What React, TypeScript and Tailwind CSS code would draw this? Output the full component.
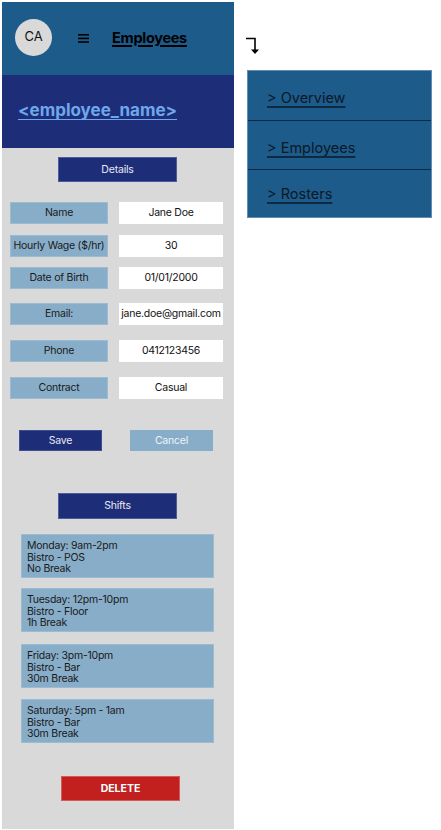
import React from "react";

const fields: [string, string][] = [
  ["Name", "Jane Doe"],
  ["Hourly Wage ($/hr)", "30"],
  ["Date of Birth", "01/01/2000"],
  ["Email:", "jane.doe@gmail.com"],
  ["Phone", "0412123456"],
  ["Contract", "Casual"],
];

const rowMargins = ["mt-[20px]", "mt-[11px]", "mt-[10px]", "mt-[14px]", "mt-[15px]", "mt-[15px]"];

const shifts: string[][] = [
  ["Monday: 9am-2pm", "Bistro - POS", "No Break"],
  ["Tuesday: 12pm-10pm", "Bistro - Floor", "1h Break"],
  ["Friday: 3pm-10pm", "Bistro - Bar", "30m Break"],
  ["Saturday: 5pm - 1am", "Bistro - Bar", "30m Break"],
];
const shiftMargins = ["mt-[15px]", "mt-[10px]", "mt-[12px]", "mt-[11px]"];

export default function App() {
  return (
    <div
      className="flex bg-white w-[441px] h-[830px] pl-[2px] pt-[2px]"
      style={{ fontFamily: "Inter, 'Noto Sans', sans-serif" }}
    >
      {/* phone panel */}
      <div className="flex flex-col w-[232px] h-[827px] bg-[#d9d9d9]">
        {/* header */}
        <div className="flex items-center h-[73px] bg-[#1c5b8a] pl-[13px]">
          <div className="flex items-center justify-center w-[37px] h-[37px] rounded-full bg-[#d9d9d9] text-[13px] text-[#111] mt-[-3px]">
            CA
          </div>
          <svg width="11" height="9" viewBox="0 0 11 9" className="ml-[26px]">
            <rect x="0" y="0" width="11" height="1.6" fill="#000" />
            <rect x="0" y="3.6" width="11" height="1.6" fill="#000" />
            <rect x="0" y="7.2" width="11" height="1.6" fill="#000" />
          </svg>
          <span className="ml-[23px] text-[14.5px] font-bold text-black underline decoration-2 underline-offset-2 tracking-[-0.3px] mt-[-1px]">
            Employees
          </span>
        </div>
        {/* name band */}
        <div className="flex items-center h-[73px] bg-[#1e2d78] pl-[16px]">
          <span className="text-[17px] font-bold text-[#6ea8ec] underline underline-offset-[3px] mt-[-1px]">
            &lt;employee_name&gt;
          </span>
        </div>
        {/* body */}
        <div className="flex flex-col">
          <div className="self-start ml-[56px] mt-[9px] w-[119px] h-[25px] flex items-center justify-center bg-[#1e2d78] border border-[#4b5c9c] text-[10.5px] tracking-[-0.2px] text-[#e8e8f2]">
            Details
          </div>
          {fields.map(([label, value], i) => (
            <div key={label} className={`flex ${rowMargins[i]} pl-[8px]`}>
              <div className="w-[98px] h-[22px] flex items-center justify-center bg-[#88adc9] border border-[#9bbbd3] text-[10.5px] tracking-[-0.25px] text-[#1a1a1a] whitespace-nowrap">
                {label}
              </div>
              <div className="ml-[11px] w-[104px] h-[22px] flex items-center justify-center bg-white text-[10.5px] tracking-[-0.25px] text-[#111] whitespace-nowrap">
                {value}
              </div>
            </div>
          ))}
          <div className="flex mt-[31px] pl-[17px]">
            <div className="w-[83px] h-[21px] flex items-center justify-center bg-[#1e2d78] border border-[#3d4f92] text-[10.5px] tracking-[-0.2px] text-[#e8e8f2]">
              Save
            </div>
            <div className="ml-[28px] w-[83px] h-[21px] flex items-center justify-center bg-[#88adc9] text-[10.5px] tracking-[-0.2px] text-[#eef3f8]">
              Cancel
            </div>
          </div>
          <div className="self-start ml-[56px] mt-[42px] w-[119px] h-[26px] flex items-center justify-center bg-[#1e2d78] border border-[#4b5c9c] text-[10.5px] tracking-[-0.2px] text-[#e8e8f2]">
            Shifts
          </div>
          {shifts.map((lines, i) => (
            <div
              key={i}
              className={`${shiftMargins[i]} ml-[19px] w-[193px] h-[44px] bg-[#88adc9] border border-[#9bbbd3] pl-[5px] pt-[5px] text-[10.5px] tracking-[-0.25px] leading-[11.7px] text-[#1a1a1a]`}
            >
              {lines.map((l) => (
                <div key={l}>{l}</div>
              ))}
            </div>
          ))}
          <div className="self-start ml-[59px] mt-[33px] w-[119px] h-[25px] flex items-center justify-center bg-[#c21f1f] border border-[#d65a5a] text-[10.5px] font-bold text-white">
            DELETE
          </div>
        </div>
      </div>

      {/* right side */}
      <div className="flex flex-col ml-[11px]">
        <svg width="16" height="18" viewBox="0 0 16 18" className="mt-[35px]">
          <path d="M1 1.5 H10 V14" stroke="#000" strokeWidth="1.6" fill="none" />
          <path d="M6 12.5 L10 17 L14 12.5 Z" fill="#000" />
        </svg>
        <div className="mt-[15px] ml-[2px] w-[185px] h-[148px] flex flex-col bg-[#1c5b8a] border border-[#5f8db3]">
          <div className="h-[50px] flex items-center pl-[19px] border-b border-[#0e2a42]">
            <span className="text-[14.5px] text-[#0b1826] underline decoration-2 decoration-[#0e2a42] underline-offset-[3px] mt-[4px]">
              &gt; Overview
            </span>
          </div>
          <div className="h-[49px] flex items-center pl-[19px] border-b border-[#0e2a42]">
            <span className="text-[14.5px] text-[#0b1826] underline decoration-2 decoration-[#0e2a42] underline-offset-[3px] mt-[6px]">
              &gt; Employees
            </span>
          </div>
          <div className="flex-1 flex items-center pl-[19px]">
            <span className="text-[14.5px] text-[#0b1826] underline decoration-2 decoration-[#0e2a42] underline-offset-[3px] mt-[0px]">
              &gt; Rosters
            </span>
          </div>
        </div>
      </div>
    </div>
  );
}
